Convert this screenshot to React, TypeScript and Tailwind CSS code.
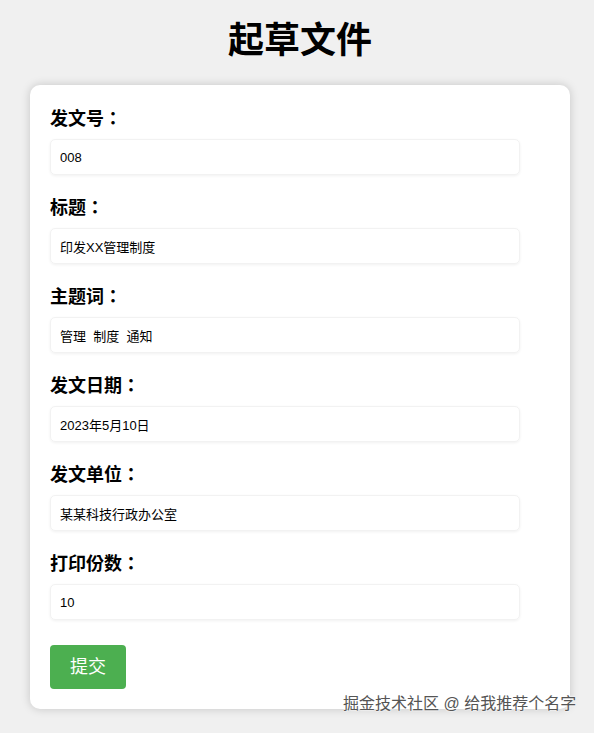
import { useState } from "react";

const fields = [
  { label: "发文号：", value: "008" },
  { label: "标题：", value: "印发XX管理制度" },
  { label: "主题词：", value: "管理  制度  通知" },
  { label: "发文日期：", value: "2023年5月10日" },
  { label: "发文单位：", value: "某某科技行政办公室" },
  { label: "打印份数：", value: "10" },
];

export default function App() {
  const [values, setValues] = useState(fields.map((f) => f.value));

  return (
    <div className="relative min-h-[733px] bg-[#f0f0f0] px-[30px] pt-[16px] font-['Liberation_Sans','Noto_Sans_CJK_SC',sans-serif] text-black">
      <h1 className="w-[540px] text-center text-[36px] font-bold leading-[50px]">起草文件</h1>
      <form
        className="mt-[19px] w-[540px] rounded-[10px] bg-white p-5 shadow-[0_0_10px_rgba(0,0,0,0.18)]"
        onSubmit={(e) => e.preventDefault()}
      >
        {fields.map((f, i) => (
          <div key={f.label} className="mb-[19px]">
            <label className="block pt-[1px] font-['Liberation_Sans','Noto_Sans_CJK_TC',sans-serif] text-[18px] font-bold leading-[26px]">
              {f.label}
            </label>
            <input
              className="mt-[7px] block h-9 w-[470px] rounded-[5px] border border-[#f2f2f2] px-[9px] text-[13px] whitespace-pre shadow-[0_1px_3px_rgba(0,0,0,0.06)] outline-none"
              value={values[i]}
              onChange={(e) => {
                const next = [...values];
                next[i] = e.target.value;
                setValues(next);
              }}
            />
          </div>
        ))}
        <button
          type="submit"
          className="mt-[6px] h-11 w-[76px] rounded-[4px] bg-[#4caf50] text-[18px] text-white"
        >
          提交
        </button>
      </form>
      <div className="absolute left-[343px] top-[693px] text-[16px] leading-[22px] text-[#555] [text-shadow:0_0_2px_#fff,0_0_2px_#fff]">
        掘金技术社区 @ 给我推荐个名字
      </div>
    </div>
  );
}
